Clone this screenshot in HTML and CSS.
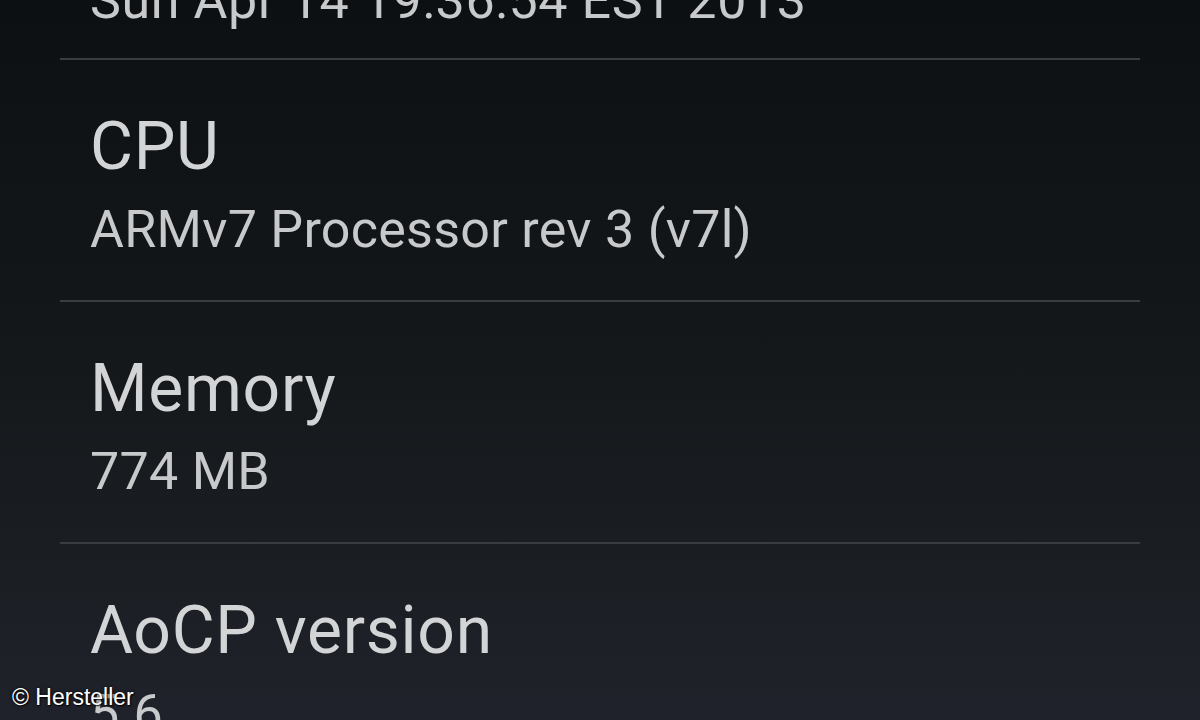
FILE: index.html
```html
<!DOCTYPE html>
<html lang="en">
<head>
<meta charset="utf-8">
<title>About phone</title>
<link rel="stylesheet" href="styles.css">
</head>
<body>
<main class="screen">
  <ul class="prefs">
    <li class="pref pref-partial">
      <div class="summary">Sun Apr 14 19:36:54 EST 2013</div>
    </li>
    <li class="pref">
      <div class="title">CPU</div>
      <div class="summary">ARMv7 Processor rev 3 (v7l)</div>
    </li>
    <li class="pref">
      <div class="title">Memory</div>
      <div class="summary">774 MB</div>
    </li>
    <li class="pref">
      <div class="title">AoCP version</div>
      <div class="summary">5.6</div>
    </li>
  </ul>
  <div class="credit">© Hersteller</div>
</main>
</body>
</html>
```

FILE: styles.css
```css
html, body {
  margin: 0;
  padding: 0;
  height: 100%;
}

body {
  background: #101316;
  font-family: Roboto, "Noto Sans", "DejaVu Sans", sans-serif;
  overflow: hidden;
}

.screen {
  position: relative;
  width: 1200px;
  height: 720px;
  overflow: hidden;
  background: linear-gradient(180deg, #0d1012 0%, #111417 25%, #15181b 50%, #1a1d21 75%, #1f222a 100%);
}

.prefs {
  list-style: none;
  margin: 0;
  padding: 0 60px;
}

.pref {
  padding: 47px 0 38px 30px;
  border-bottom: 2px solid #3a3d40;
}

.pref-partial {
  margin-top: -31px;
  padding-top: 0;
  padding-bottom: 25px;
}

.title {
  font-size: 66px;
  line-height: 80px;
  letter-spacing: 0.7px;
  color: #d3d4d5;
  white-space: nowrap;
}

.summary {
  font-size: 52px;
  line-height: 64px;
  letter-spacing: 0.28px;
  color: #c8c9ca;
  white-space: nowrap;
}

.pref-partial .summary {
  letter-spacing: 0.6px;
}

.title + .summary {
  margin-top: 11px;
}

.credit {
  position: absolute;
  left: 12px;
  bottom: 10px;
  font-family: "Liberation Sans", Arial, sans-serif;
  font-size: 23px;
  line-height: 26px;
  color: #ffffff;
  text-shadow: 0 0 3px rgba(0, 0, 0, 0.9), 1px 1px 1px rgba(0, 0, 0, 0.8);
}
```
